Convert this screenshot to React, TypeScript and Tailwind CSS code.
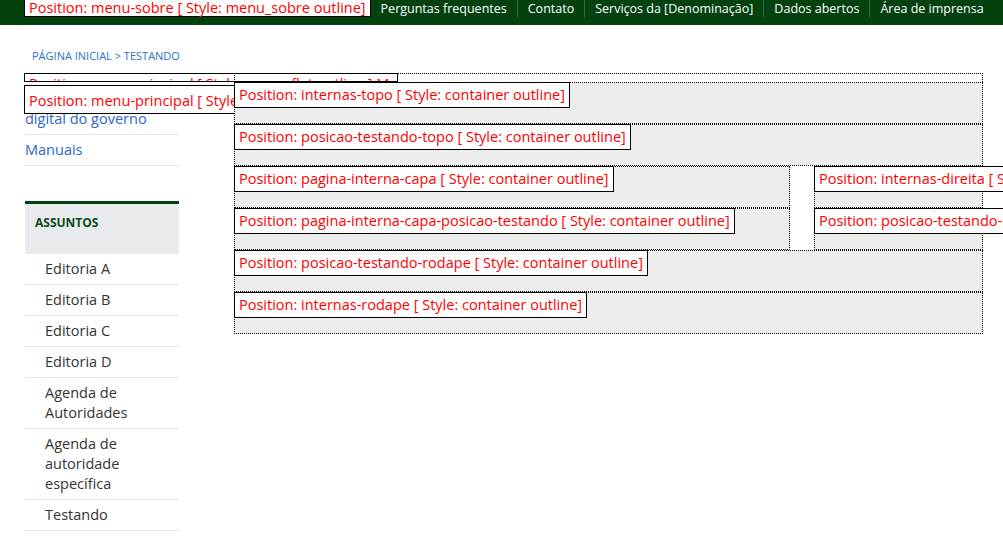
const navLinks = [
  "Perguntas frequentes",
  "Contato",
  "Serviços da [Denominação]",
  "Dados abertos",
  "Área de imprensa",
];

const assuntos: string[][] = [
  ["Editoria A"],
  ["Editoria B"],
  ["Editoria C"],
  ["Editoria D"],
  ["Agenda de", "Autoridades"],
  ["Agenda de", "autoridade", "específica"],
  ["Testando"],
];

const Label = ({ text }: { text: string }) => (
  <div className="absolute -top-px -left-px z-10 h-[26px] whitespace-nowrap border border-black bg-white px-[4px] text-[14.5px] leading-[24px] text-[#ff0000]">
    {text}
  </div>
);

const PositionBox = ({ name }: { name: string }) => (
  <div className="relative h-[42px] border border-dotted border-black bg-[#ededed]">
    <Label text={`Position: ${name} [ Style: container outline]`} />
  </div>
);

export default function App() {
  return (
    <div className="min-h-screen w-full overflow-hidden bg-white font-['Open_Sans',sans-serif]">
      {/* top bar */}
      <div className="flex h-[25px] items-start justify-between bg-[#03420f]">
        <div className="ml-[24px] -mt-px h-[18px] shrink-0 whitespace-nowrap border border-black bg-white px-[4px] text-[14.5px] leading-[15px] text-[#ff0000]">
          Position: menu-sobre [ Style: menu_sobre outline]
        </div>
        <nav className="flex shrink-0 pr-[20px]">
          {navLinks.map((link, i) => (
            <a
              key={link}
              className={
                "whitespace-nowrap px-[10px] text-[12.5px] leading-[17px] text-white " +
                (i > 0 ? "border-l border-white/20" : "")
              }
            >
              {link}
            </a>
          ))}
        </nav>
      </div>

      {/* breadcrumb */}
      <div className="mt-[24px] pl-[32px] text-[11px] uppercase leading-[14px] text-[#2e6fc9]">
        Página inicial &gt; Testando
      </div>

      <div className="mt-[10px] flex">
        {/* sidebar */}
        <aside className="relative ml-[25px] w-[154px] shrink-0">
          <div className="absolute top-0 -left-px z-[1] h-[16px] w-[374px] overflow-hidden whitespace-nowrap border border-black bg-white px-[4px] text-[14.5px] leading-[20px] text-[#ff0000]">
            Position: menu-principal [ Style: menu_flat outline ] Menu item 3
          </div>
          <div className="absolute top-[8px] -left-px z-[2] h-[5px] w-[374px] border-y border-black bg-white" />
          <div className="absolute top-[12px] -left-px z-[3] h-[29px] w-[346px] whitespace-nowrap border border-black bg-white px-[4px] pt-[3px] text-[14.5px] leading-[24px] text-[#ff0000]">
            Position: menu-principal [ Style: menu_principal outline]
          </div>

          <ul className="pt-[11px] text-[14.5px] leading-[20px] text-[#2c66ce]">
            <li className="border-b border-[#e3e3e3] py-[5px]">
              Identidade
              <br />
              digital do governo
            </li>
            <li className="border-b border-[#e3e3e3] py-[5px]">Manuais</li>
          </ul>

          <div className="mt-[35px] border-t-[3px] border-[#03420f]">
            <div className="h-[50px] bg-[#e9eaed] px-[10px] pt-[10px] text-[12px] font-bold leading-[18px] text-[#0b4a1a]">
              ASSUNTOS
            </div>
            <ul className="text-[14.5px] leading-[20px] text-[#333333]">
              {assuntos.map((lines, i) => (
                <li key={i} className="border-b border-[#e3e3e3] px-[20px] py-[5px]">
                  {lines.map((l, j) => (
                    <div key={j}>{l}</div>
                  ))}
                </li>
              ))}
            </ul>
          </div>
        </aside>

        {/* main */}
        <main className="relative z-10 ml-[55px] w-[749px] shrink-0">
          <div className="border border-dotted border-black pt-[8px]">
            <div className="-mx-px">
              <PositionBox name="internas-topo" />
              <PositionBox name="posicao-testando-topo" />
              <div className="flex">
                <div className="w-[556px]">
                  <PositionBox name="pagina-interna-capa" />
                  <PositionBox name="pagina-interna-capa-posicao-testando" />
                </div>
                <div className="ml-[24px] flex-1 bg-white">
                  <PositionBox name="internas-direita" />
                  <PositionBox name="posicao-testando-direita" />
                </div>
              </div>
              <PositionBox name="posicao-testando-rodape" />
              <div className="-mb-px">
                <PositionBox name="internas-rodape" />
              </div>
            </div>
          </div>
        </main>
      </div>
    </div>
  );
}
